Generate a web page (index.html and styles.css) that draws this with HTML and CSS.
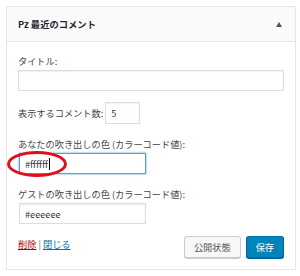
FILE: index.html
```html
<!DOCTYPE html>
<html lang="ja">
<head>
<meta charset="utf-8">
<link rel="stylesheet" href="styles.css">
</head>
<body>
<div class="widget">
  <div class="widget-top">
    <span class="widget-title">Pz 最近のコメント</span>
    <span class="toggle"></span>
  </div>
  <div class="widget-inside">
    <div class="field">
      <label class="lbl">タイトル:</label>
      <span class="input wide"></span>
    </div>
    <div class="field inline">
      <label class="lbl">表示するコメント数:</label>
      <span class="input small">5</span>
    </div>
    <div class="field">
      <label class="lbl">あなたの吹き出しの色 (カラーコード値):</label>
      <span class="input mid focus">#ffffff<span class="caret"></span><span class="circle"></span></span>
    </div>
    <div class="field">
      <label class="lbl">ゲストの吹き出しの色 (カラーコード値):</label>
      <span class="input mid">#eeeeee</span>
    </div>
    <div class="controls">
      <div class="links"><a class="del">削除</a> <span class="sep">|</span> <a class="close">閉じる</a></div>
      <div class="buttons">
        <span class="btn">公開状態</span>
        <span class="btn primary">保存</span>
      </div>
    </div>
  </div>
</div>
</body>
</html>
```
FILE: styles.css
```css
* { box-sizing: border-box; }
body {
  margin: 0;
  background: #fff;
  font-family: "Noto Sans CJK JP", "Noto Sans", sans-serif;
  font-size: 9.2px;
  color: #444;
}
.widget {
  margin: 6px 5px 0 6px;
  width: 290px;
  border: 1px solid #e5e5e5;
  background: #fff;
  box-shadow: 0 1px 1px rgba(0,0,0,0.04);
}
.widget-top {
  height: 35px;
  background: #fafafa;
  border-bottom: 1px solid #e5e5e5;
  display: flex;
  align-items: center;
  justify-content: space-between;
  padding: 0 13px 0 11px;
}
.widget-title {
  font-weight: bold;
  color: #23282d;
  font-size: 9.3px;
}
.toggle {
  width: 0; height: 0;
  border-left: 3.5px solid transparent;
  border-right: 3.5px solid transparent;
  border-bottom: 5px solid #555;
}
.widget-inside {
  padding: 11px 11px 11px 11px;
}
.field { margin: 0; }
.lbl { display: block; line-height: 16px; margin-bottom: 1px; }
.inline { display: flex; align-items: center; gap: 2px; margin-top: 11px; }
.inline .lbl { display: inline; margin-bottom: 0; }
.field + .field:not(.inline) { margin-top: 12px; }
.input {
  display: flex;
  align-items: center;
  height: 21px;
  border: 1px solid #ddd;
  box-shadow: inset 0 1px 2px rgba(0,0,0,0.07);
  padding: 0 5px;
  color: #32373c;
  background: #fff;
  position: relative;
}
.wide { width: 266px; }
.small { width: 35px; height: 22px; }
.mid { width: 127px; margin-left: 1px; }
.focus { border-color: #5b9dd9; box-shadow: 0 0 2px rgba(30,140,190,0.8); }
.caret { display: inline-block; width: 1px; height: 12px; background: #000; margin-left: 1px; }
.circle {
  position: absolute;
  left: -13px; top: -3px;
  width: 60px; height: 26px;
  border: 3.5px solid #e0101a;
  border-radius: 50%;
}
.controls {
  display: flex;
  justify-content: space-between;
  align-items: flex-start;
  margin-top: 12px;
}
.links { line-height: 16px; margin-top: 0; }
.del { color: #a00; text-decoration: underline; }
.sep { color: #666; }
.close { color: #0073aa; text-decoration: underline; }
.buttons { display: flex; gap: 5px; }
.btn {
  display: inline-flex;
  align-items: center;
  justify-content: center;
  height: 22px;
  padding: 0 9px;
  border: 1px solid #ccc;
  border-radius: 3px;
  background: #f7f7f7;
  box-shadow: 0 1px 0 #ccc;
  color: #555;
}
.primary {
  background: #0085ba;
  border-color: #0073aa #006799 #006799;
  box-shadow: 0 1px 0 #006799;
  color: #fff;
}
```
